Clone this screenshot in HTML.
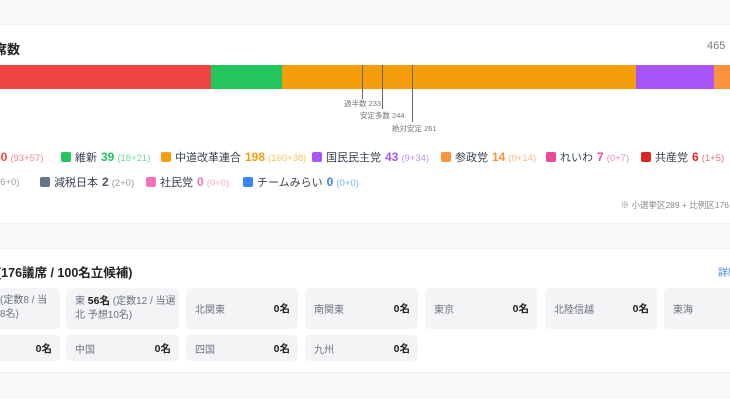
<!DOCTYPE html><html><head><meta charset="utf-8"><style>
*{margin:0;padding:0;box-sizing:border-box}
body{width:730px;height:410px;overflow:hidden;background:#fff;font-family:"Liberation Sans","Noto Sans CJK JP",sans-serif;color:#333;position:relative}
.a{position:absolute;white-space:nowrap}
.g{background:#f8f9fb}
.sq{position:absolute;width:10px;height:10px;border-radius:2px}
.lg{position:absolute;font-size:11px;color:#374151;white-space:nowrap;line-height:14px}
.lg b{font-size:12px;margin-left:4px}
.lg small{font-size:9.5px;margin-left:3px;opacity:.65}
.card{position:absolute;background:#f3f4f6;border-radius:5px;font-size:10px;color:#6b7280}
.card .n{position:absolute;right:8px;font-weight:bold;color:#222;font-size:10.5px}
.ml{position:absolute;width:1px;background:#666}
.lb{position:absolute;font-size:7.5px;color:#777;white-space:nowrap}
</style></head><body>
<div class="a g" style="left:0;top:0;width:730px;height:25px;border-bottom:1px solid #eef0f3"></div>
<div class="a g" style="left:0;top:223px;width:730px;height:26px;border-top:1px solid #eef0f3;border-bottom:1px solid #eef0f3"></div>
<div class="a g" style="left:0;top:372px;width:730px;height:26px;border-top:1px solid #eef0f3;border-bottom:1px solid #eef0f3"></div>

<div class="a" style="left:-19px;top:39px;font-size:13px;font-weight:bold;color:#222">議席数</div>
<div class="a" style="left:707px;top:40px;font-size:11px;color:#777">465</div>

<div class="a" style="left:0;top:65px;width:211px;height:24px;background:#ef4444"></div>
<div class="a" style="left:211px;top:65px;width:71px;height:24px;background:#22c55e"></div>
<div class="a" style="left:282px;top:65px;width:354px;height:24px;background:#f59e0b"></div>
<div class="a" style="left:636px;top:65px;width:78px;height:24px;background:#a855f7"></div>
<div class="a" style="left:714px;top:65px;width:16px;height:24px;background:#fb923c"></div>
<div class="ml" style="left:362px;top:65px;height:34px"></div>
<div class="ml" style="left:382px;top:65px;height:44px"></div>
<div class="ml" style="left:412px;top:65px;height:57px"></div>
<div class="lb" style="left:344px;top:98px">過半数 233</div>
<div class="lb" style="left:360px;top:110px">安定多数 244</div>
<div class="lb" style="left:392px;top:123px">絶対安定 261</div>

<div class="lg" style="left:-6px;top:150px"><b style="color:#ef4444;margin:0">50</b><small style="color:#ef4444">(93+57)</small></div>
<div class="sq" style="left:61px;top:152px;background:#22c55e"></div><div class="lg" style="left:75px;top:150px">維新<b style="color:#22c55e">39</b><small style="color:#22c55e">(18+21)</small></div>
<div class="sq" style="left:161px;top:152px;background:#f59e0b"></div><div class="lg" style="left:175px;top:150px">中道改革連合<b style="color:#f59e0b">198</b><small style="color:#f59e0b">(160+38)</small></div>
<div class="sq" style="left:312px;top:152px;background:#a855f7"></div><div class="lg" style="left:326px;top:150px">国民民主党<b style="color:#a855f7">43</b><small style="color:#a855f7">(9+34)</small></div>
<div class="sq" style="left:441px;top:152px;background:#fb923c"></div><div class="lg" style="left:455px;top:150px">参政党<b style="color:#fb923c">14</b><small style="color:#fb923c">(0+14)</small></div>
<div class="sq" style="left:546px;top:152px;background:#ec4899"></div><div class="lg" style="left:560px;top:150px">れいわ<b style="color:#ec4899">7</b><small style="color:#ec4899">(0+7)</small></div>
<div class="sq" style="left:641px;top:152px;background:#dc2626"></div><div class="lg" style="left:655px;top:150px">共産党<b style="color:#dc2626">6</b><small style="color:#dc2626">(1+5)</small></div>

<div class="lg" style="left:-3px;top:175px"><small style="color:#666;margin:0">(6+0)</small></div>
<div class="sq" style="left:40px;top:177px;background:#64748b"></div><div class="lg" style="left:54px;top:175px">減税日本<b style="color:#475569">2</b><small style="color:#666">(2+0)</small></div>
<div class="sq" style="left:146px;top:177px;background:#f472b6"></div><div class="lg" style="left:160px;top:175px">社民党<b style="color:#f472b6">0</b><small style="color:#f472b6">(0+0)</small></div>
<div class="sq" style="left:243px;top:177px;background:#3b82f6"></div><div class="lg" style="left:257px;top:175px">チームみらい<b style="color:#3b82f6">0</b><small style="color:#3b82f6">(0+0)</small></div>
<div class="a" style="right:1px;top:199px;font-size:8.5px;color:#888">※ 小選挙区289 + 比例区176</div>

<div class="a" style="left:-3px;top:262px;font-size:12.5px;font-weight:bold;color:#222">(176議席 / 100名立候補)</div>
<div class="a" style="left:718px;top:264px;font-size:10px;color:#3b82f6">詳細</div>

<div class="card" style="left:-10px;top:288px;width:70px;height:41px"><div class="a" style="left:10px;top:6px;line-height:14px">(定数8 / 当<br>8名)</div></div>
<div class="card" style="left:66px;top:288px;width:113px;height:41px"><div class="a" style="left:9px;top:6px;line-height:14px">東 <b style="color:#222;font-size:10.5px">56名</b> (定数12 / 当選<br>北 予想10名)</div></div>
<div class="card" style="left:186px;top:288px;width:112px;height:41px"><span class="a" style="left:9px;top:13px">北関東</span><span class="n" style="top:13px">0名</span></div>
<div class="card" style="left:305px;top:288px;width:113px;height:41px"><span class="a" style="left:9px;top:13px">南関東</span><span class="n" style="top:13px">0名</span></div>
<div class="card" style="left:425px;top:288px;width:112px;height:41px"><span class="a" style="left:9px;top:13px">東京</span><span class="n" style="top:13px">0名</span></div>
<div class="card" style="left:545px;top:288px;width:112px;height:41px"><span class="a" style="left:9px;top:13px">北陸信越</span><span class="n" style="top:13px">0名</span></div>
<div class="card" style="left:664px;top:288px;width:112px;height:41px"><span class="a" style="left:9px;top:13px">東海</span></div>

<div class="card" style="left:-50px;top:335px;width:110px;height:26px"><span class="n" style="top:6px">0名</span></div>
<div class="card" style="left:66px;top:335px;width:113px;height:26px"><span class="a" style="left:9px;top:6px">中国</span><span class="n" style="top:6px">0名</span></div>
<div class="card" style="left:186px;top:335px;width:112px;height:26px"><span class="a" style="left:9px;top:6px">四国</span><span class="n" style="top:6px">0名</span></div>
<div class="card" style="left:305px;top:335px;width:113px;height:26px"><span class="a" style="left:9px;top:6px">九州</span><span class="n" style="top:6px">0名</span></div>
</body></html>
